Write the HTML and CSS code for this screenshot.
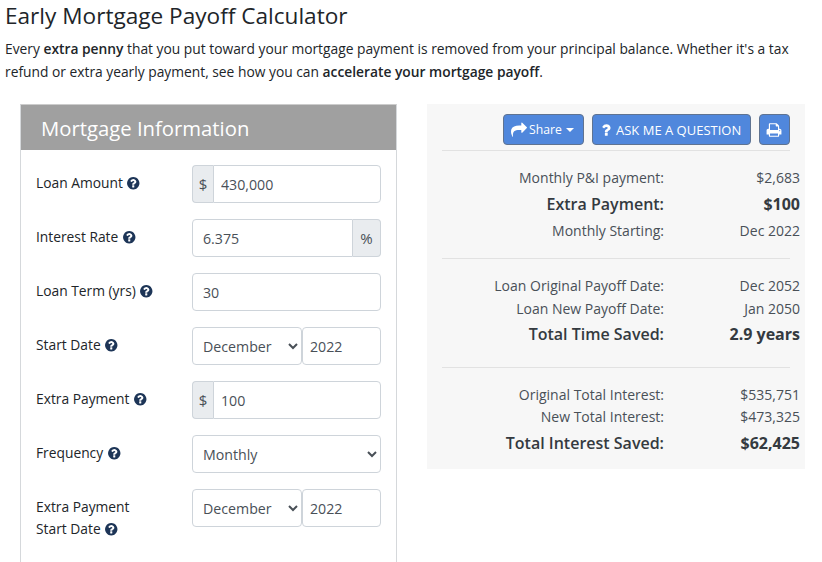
FILE: index.html
```html
<!DOCTYPE html>
<html lang="en">
<head>
    <meta charset="UTF-8">
    <title>Early Mortgage Payoff Calculator</title>
    <link rel="stylesheet" href="styles.css">
</head>
<body>
    <svg class="icon-defs" xmlns="http://www.w3.org/2000/svg">
        <symbol id="i-help" viewBox="0 0 1792 1792"><path d="M1024 1376v-192q0-14-9-23t-23-9h-192q-14 0-23 9t-9 23v192q0 14 9 23t23 9h192q14 0 23-9t9-23zm256-672q0-88-55.500-163t-138.500-116-170-41q-243 0-371 213-15 24 8 42l132 100q7 6 19 6 16 0 25-12 53-68 86-92 34-24 86-24 48 0 85.500 26t37.500 59q0 38-20 61t-68 45q-63 28-115.500 86.500t-52.500 125.500v36q0 14 9 23t23 9h192q14 0 23-9t9-23q0-19 21.500-49.500t54.500-49.500q32-18 49-28.500t46-35 44.500-48 28-60.500 12.500-81zm384 192q0 209-103 385.500t-279.500 279.500-385.500 103-385.500-103-279.500-279.500-103-385.500 103-385.500 279.500-279.500 385.500-103 385.500 103 279.500 279.500 103 385.500z"/></symbol>
        <symbol id="i-share" viewBox="0 0 1792 1792"><path d="M1792 640q0 26-19 45l-512 512q-19 19-45 19t-45-19-19-45v-256h-224q-98 0-175.500 6t-154 21.500-133 42.500-105.500 69.500-80 101-48.500 138.500-17.500 181q0 55 5 123 0 6 2.500 23.500t2.500 26.500q0 15-8.500 25t-23.500 10q-16 0-28-17-7-9-13-22t-13.500-30-10.500-24q-127-285-127-451 0-199 53-333 162-403 875-403h224v-256q0-26 19-45t45-19 45 19l512 512q19 19 19 45z"/></symbol>
        <symbol id="i-question" viewBox="0 0 1792 1792"><path d="M1088 1256v240q0 16-12 28t-28 12h-240q-16 0-28-12t-12-28v-240q0-16 12-28t28-12h240q16 0 28 12t12 28zm316-600q0 54-15.500 101t-35 76.500-55 59.500-57.500 43.500-61 35.500q-41 23-68.500 65t-27.500 67q0 17-12 32.500t-28 15.500h-240q-15 0-25.500-18.500t-10.500-37.500v-45q0-83 65-156.500t143-108.500q59-27 84-56t25-76q0-42-46.500-74t-107.500-32q-65 0-108 29-35 25-107 115-13 16-31 16-12 0-25-8l-164-125q-13-10-15.500-25t5.500-28q160-266 464-266 80 0 161 31t146 83 106 127.500 41 158.500z"/></symbol>
        <symbol id="i-print" viewBox="0 0 1792 1792"><path d="M448 1536h896v-256h-896v256zm0-640h896v-384h-160q-40 0-68-28t-28-68v-160h-640v640zm1152 64q0-26-19-45t-45-19-45 19-19 45 19 45 45 19 45-19 19-45zm128 0v416q0 13-9.500 22.500t-22.500 9.500h-224v160q0 40-28 68t-68 28h-960q-40 0-68-28t-28-68v-160h-224q-13 0-22.500-9.500t-9.500-22.500v-416q0-79 56.500-135.500t135.500-56.500h64v-544q0-40 28-68t68-28h672q40 0 88 20t76 48l152 152q28 28 48 76t20 88v256h64q79 0 135.500 56.500t56.500 135.500z"/></symbol>
    </svg>

    <div class="page">
        <h1>Early Mortgage Payoff Calculator</h1>
        <p class="intro">Every <b>extra penny</b> that you put toward your mortgage payment is removed from your principal balance. Whether it's a tax refund or extra yearly payment, see how you can <b>accelerate your mortgage payoff</b>.</p>

        <div class="columns">
            <!-- Form -->
            <div class="form-panel">
                <h2>Mortgage Information</h2>
                <div class="form-body">
                    <div class="form-row">
                        <label>Loan Amount <svg class="help"><use href="#i-help"/></svg></label>
                        <div class="input-group">
                            <span class="addon">$</span>
                            <input class="field" type="text" value="430,000">
                        </div>
                    </div>
                    <div class="form-row">
                        <label>Interest Rate <svg class="help"><use href="#i-help"/></svg></label>
                        <div class="input-group">
                            <input class="field" type="text" value="6.375">
                            <span class="addon addon-right">%</span>
                        </div>
                    </div>
                    <div class="form-row">
                        <label>Loan Term (yrs) <svg class="help"><use href="#i-help"/></svg></label>
                        <div class="input-group">
                            <input class="field" type="text" value="30">
                        </div>
                    </div>
                    <div class="form-row">
                        <label>Start Date <svg class="help"><use href="#i-help"/></svg></label>
                        <div class="date-group">
                            <select class="field month"><option>December</option></select>
                            <input class="field year" type="text" value="2022">
                        </div>
                    </div>
                    <div class="form-row">
                        <label>Extra Payment <svg class="help"><use href="#i-help"/></svg></label>
                        <div class="input-group">
                            <span class="addon">$</span>
                            <input class="field" type="text" value="100">
                        </div>
                    </div>
                    <div class="form-row">
                        <label>Frequency <svg class="help"><use href="#i-help"/></svg></label>
                        <div class="input-group">
                            <select class="field"><option>Monthly</option></select>
                        </div>
                    </div>
                    <div class="form-row">
                        <label>Extra Payment<br>Start Date <svg class="help"><use href="#i-help"/></svg></label>
                        <div class="date-group">
                            <select class="field month"><option>December</option></select>
                            <input class="field year" type="text" value="2022">
                        </div>
                    </div>
                </div>
            </div>

            <!-- Results -->
            <div class="results-panel">
                <div class="toolbar">
                    <button class="btn btn-share"><svg class="btn-icon"><use href="#i-share"/></svg>Share<span class="caret"></span></button>
                    <button class="btn btn-caps"><svg class="btn-icon"><use href="#i-question"/></svg>ASK ME A QUESTION</button>
                    <button class="btn btn-print"><svg class="btn-icon"><use href="#i-print"/></svg></button>
                </div>
                <div class="result-group first">
                    <div class="result"><span>Monthly P&amp;I payment:</span><span>$2,683</span></div>
                    <div class="result big"><span>Extra Payment:</span><b>$100</b></div>
                    <div class="result"><span>Monthly Starting:</span><span>Dec 2022</span></div>
                </div>
                <div class="result-group">
                    <div class="result"><span>Loan Original Payoff Date:</span><span>Dec 2052</span></div>
                    <div class="result"><span>Loan New Payoff Date:</span><span>Jan 2050</span></div>
                    <div class="result big"><span>Total Time Saved:</span><b>2.9 years</b></div>
                </div>
                <div class="result-group last">
                    <div class="result"><span>Original Total Interest:</span><span>$535,751</span></div>
                    <div class="result"><span>New Total Interest:</span><span>$473,325</span></div>
                    <div class="result big"><span>Total Interest Saved:</span><b>$62,425</b></div>
                </div>
            </div>
        </div>
    </div>
</body>
</html>
```

FILE: styles.css
```css
/* General Styles */
html, body {
    margin: 0;
    padding: 0;
    height: 562px;
    overflow: hidden;
}

body {
    font-family: "Open Sans", "Noto Sans", Arial, sans-serif;
    font-size: 13.8px;
    line-height: 1.5;
    color: #212529;
    background-color: #fff;
}

.icon-defs {
    display: none;
}

.page {
    padding: 0 5px;
}

h1 {
    margin: 0;
    padding-top: 1px;
    padding-bottom: 1px;
    font-size: 22.6px;
    font-weight: 400;
    line-height: 30px;
}

.intro {
    margin: 5px 0 0;
    line-height: 23px;
}

.intro b {
    font-weight: 600;
}

.columns {
    display: flex;
    align-items: flex-start;
    margin-top: 21px;
    padding-left: 15px;
    gap: 30px;
}

/* Form */
.form-panel {
    width: 377px;
    height: 600px;
    flex: none;
    box-sizing: border-box;
    border: 1px solid #d5d8db;
    border-top-color: #ccc;
}

.form-panel h2 {
    margin: 0;
    padding: 2px 20px 0;
    font-size: 20.3px;
    font-weight: 400;
    line-height: 43px;
    color: #fff;
    background-color: #a0a0a0;
}

.form-body {
    padding: 15px 15px 0;
}

.form-row {
    display: flex;
    margin-bottom: 16px;
}

.form-row label {
    width: 156px;
    flex: none;
    padding-top: 7px;
    line-height: 22px;
    color: #212529;
}

.help {
    width: 14.5px;
    height: 14.5px;
    vertical-align: -2px;
    fill: #1d3557;
}

.input-group, .date-group {
    display: flex;
    width: 189px;
    height: 38px;
}

.field {
    width: 100%;
    min-width: 0;
    box-sizing: border-box;
    height: 38px;
    padding: 6px 10px;
    font-family: inherit;
    font-size: 14.2px;
    color: #495057;
    background-color: #fff;
    border: 1px solid #ced4da;
    border-radius: 4px;
}

select.field {
    padding-left: 6px;
    padding-right: 2px;
}

.addon {
    width: 21px;
    flex: none;
    box-sizing: border-box;
    text-align: center;
    font-size: 15px;
    line-height: 36px;
    color: #495057;
    background-color: #e9ecef;
    border: 1px solid #ced4da;
    border-right: none;
    border-radius: 4px 0 0 4px;
}

.addon + .field {
    padding-left: 7px;
    border-radius: 0 4px 4px 0;
}

.addon-right {
    width: 28px;
    border: 1px solid #ced4da;
    border-left: none;
    border-radius: 0 4px 4px 0;
}

.input-group .field:first-child:not(:last-child) {
    border-radius: 4px 0 0 4px;
}

.month {
    width: 110px;
    flex: none;
}

.year {
    flex: 1;
    padding: 6px 7px;
}

/* Results */
.results-panel {
    width: 378px;
    height: 365px;
    flex: none;
    box-sizing: border-box;
    padding: 10px 15px 0;
    background-color: #f7f7f7;
}

.toolbar {
    display: flex;
    justify-content: flex-end;
    gap: 8px;
    padding-bottom: 5px;
    border-bottom: 1px solid #e2e2e2;
}

.btn {
    display: flex;
    align-items: center;
    height: 31px;
    padding: 0;
    font-family: inherit;
    font-size: 13px;
    color: #fff;
    background-color: #5087dc;
    border: 1px solid #5f7391;
    border-radius: 4px;
}

.btn-icon {
    width: 16px;
    height: 16px;
    flex: none;
    fill: #fff;
}

.btn-share {
    width: 81px;
    padding-left: 7px;
    font-size: 12.2px;
}

.btn-share .btn-icon {
    margin-right: 2px;
}

.btn-caps {
    width: 159px;
    padding-left: 5px;
}

.btn-caps .btn-icon {
    margin-right: 2px;
}

.btn-print {
    width: 31px;
    padding-left: 6px;
}

.caret {
    margin-left: 4px;
    border-top: 4px solid #fff;
    border-left: 4px solid transparent;
    border-right: 4px solid transparent;
}

.result-group {
    width: 358px;
    padding: 14.5px 0 20.5px;
    background-image: linear-gradient(#e2e2e2, #e2e2e2);
    background-repeat: no-repeat;
    background-position: 0 100%;
    background-size: 348px 1px;
}

.result-group.first {
    padding: 15px 0 17px;
}

.result-group.last {
    padding-top: 16px;
    background-image: none;
}

.result {
    display: grid;
    grid-template-columns: 222px 136px;
    font-size: 14px;
    line-height: 23px;
    color: #495057;
    text-align: right;
}

.first .big {
    margin: 1.5px 0;
}

.big {
    margin-top: 1px;
}

.last .result {
    line-height: 22px;
}

.last .big {
    margin-top: 1.5px;
}

.result.big, .last .result.big {
    font-size: 16px;
    line-height: 27px;
    font-weight: 600;
    color: #343a40;
}

.result.big b {
    font-weight: 700;
}
```
